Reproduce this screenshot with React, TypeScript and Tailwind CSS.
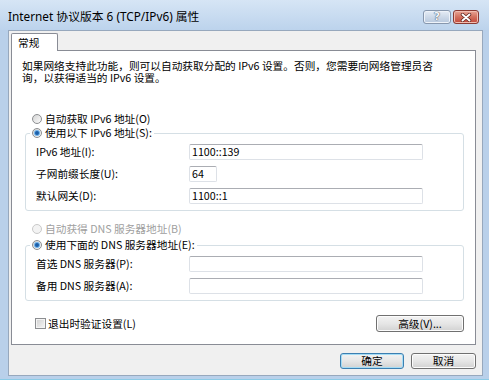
import React from "react";

const CJK = "font-['Noto_Sans_CJK_SC',sans-serif]";

function Radio({ checked, disabled }: { checked?: boolean; disabled?: boolean }) {
  return (
    <span
      className={
        "relative flex h-[10px] w-[10px] shrink-0 items-center justify-center rounded-full border " +
        (disabled
          ? "border-[#c9c9c9] bg-[#f3f3f3]"
          : "border-[#8c8e91] bg-gradient-to-br from-[#d4d4d4] to-[#fbfbfb]")
      }
    >
      {checked && (
        <span className="h-[4px] w-[4px] rounded-full bg-[#1d5fa8] shadow-[0_0_0_1px_#6fb3ec]" />
      )}
    </span>
  );
}

function Field({ w, value }: { w: string; value?: string }) {
  return (
    <div
      className={
        w +
        " flex h-[16px] items-center rounded-[2px] border border-[#dde1e7] border-t-[#abadb3] bg-white pl-[2px] text-[10.7px] leading-[14px] text-black"
      }
    >
      {value}
    </div>
  );
}

function Btn({ children, w, def, h }: { children: React.ReactNode; w: string; def?: boolean; h: string }) {
  return (
    <div
      className={
        w +
        " " +
        h +
        " flex items-center justify-center rounded-[3px] border bg-gradient-to-b from-[#f3f3f3] via-[#e6e6e6] to-[#d2d2d2] text-[10.7px] leading-[14px] text-black " +
        (def ? "border-[#3c7fb1] shadow-[inset_0_0_0_1px_#a5dcf5]" : "border-[#707070] shadow-[inset_0_0_0_1px_#fcfcfc]")
      }
    >
      {children}
    </div>
  );
}

function Row({ label, w, value }: { label: string; w: string; value?: string }) {
  return (
    <div className="flex h-[16px] items-center pl-[10px]">
      <div className="w-[153px] text-[10.7px] leading-[14px]">{label}</div>
      <Field w={w} value={value} />
    </div>
  );
}

export default function App() {
  return (
    <div className={CJK + " flex h-[380px] w-[489px] flex-col overflow-hidden bg-[#b9d0ea] text-black"}>
      {/* title bar */}
      <div className="flex h-[30px] shrink-0 items-start bg-gradient-to-b from-[#d6e5f5] to-[#bcd3ec] pl-[8px] pr-[10px]">
        <div className="mt-[8px] font-['Noto_Sans','Noto_Sans_CJK_SC',sans-serif] text-[11.8px] leading-[16px] text-black">
          Internet 协议版本 6 (TCP/IPv6) 属性
        </div>
        <div className="ml-auto mt-[10px] flex gap-[2px]">
          <div className="flex h-[14px] w-[28px] items-center justify-center rounded-[3px] border border-[#8797ad] bg-gradient-to-b from-[#e6edf6] via-[#cdd9e8] to-[#b7c8dd] shadow-[inset_0_0_0_1px_#eef3f9]">
            <span className="font-['DejaVu_Sans',sans-serif] text-[11px] font-bold leading-[12px] text-[#f4f6f9] [text-shadow:0_0_1px_#3d4d63,0_0_1px_#3d4d63]">
              ?
            </span>
          </div>
          <div className="flex h-[14px] w-[26px] items-center justify-center rounded-[3px] border border-[#8a3a33] bg-gradient-to-b from-[#e8a596] via-[#d2705e] to-[#c2463a] shadow-[inset_0_0_0_1px_#f0bcb0]">
            <svg width="12" height="9" viewBox="0 0 12 9">
              <path d="M2.5 1.5 L9.5 7.5 M9.5 1.5 L2.5 7.5" stroke="#5a1f1a" strokeWidth="3.4" strokeLinecap="round" />
              <path d="M2.5 1.5 L9.5 7.5 M9.5 1.5 L2.5 7.5" stroke="#ffffff" strokeWidth="2" strokeLinecap="round" />
            </svg>
          </div>
        </div>
      </div>

      {/* client area */}
      <div className="ml-[8px] flex h-[346px] w-[475px] flex-col border border-[#97a8bd] bg-[#f0f0f0]">
        {/* tab strip */}
        <div className="ml-[2px] mt-[1px] flex h-[18px] items-end">
          <div className="relative z-10 -mb-px flex h-[18px] w-[47px] items-center rounded-t-[2px] border border-b-0 border-[#898c95] bg-white pl-[6px] text-[10.7px] leading-[14px]">
            常规
          </div>
        </div>
        {/* panel */}
        <div className="ml-[2px] flex h-[295px] w-[465px] flex-col border border-[#898c95] bg-white">
          <div className="ml-[10px] mt-[9px] whitespace-nowrap text-[10.7px] leading-[12px]">
            <div>如果网络支持此功能，则可以自动获取分配的 IPv6 设置。否则，您需要向网络管理员咨</div>
            <div>询，以获得适当的 IPv6 设置。</div>
          </div>

          <div className="ml-[20px] mt-[28px] flex h-[14px] items-center gap-[3px] text-[10.7px] leading-[14px]">
            <Radio />
            <span>自动获取 IPv6 地址(O)</span>
          </div>

          <fieldset className="ml-[13px] w-[439px] rounded-[3px] border border-[#d5dfe5] pb-[6px]">
            <legend className="ml-[4px] px-[2px]">
              <span className="flex h-[14px] items-center gap-[3px] text-[10.7px] leading-[14px]">
                <Radio checked />
                <span>使用以下 IPv6 地址(S):</span>
              </span>
            </legend>
            <div className="mt-[4px] flex flex-col gap-[6px]">
              <Row label="IPv6 地址(I):" w="w-[234px]" value="1100::139" />
              <Row label="子网前缀长度(U):" w="w-[28px]" value="64" />
              <Row label="默认网关(D):" w="w-[234px]" value="1100::1" />
            </div>
          </fieldset>

          <div className="ml-[20px] mt-[11px] flex h-[14px] items-center gap-[3px] text-[10.7px] leading-[14px] text-[#a0a0a0]">
            <Radio disabled />
            <span>自动获得 DNS 服务器地址(B)</span>
          </div>

          <fieldset className="ml-[13px] mt-[2px] w-[439px] rounded-[3px] border border-[#d5dfe5] pb-[6px]">
            <legend className="ml-[4px] px-[2px]">
              <span className="flex h-[14px] items-center gap-[3px] text-[10.7px] leading-[14px]">
                <Radio checked />
                <span>使用下面的 DNS 服务器地址(E):</span>
              </span>
            </legend>
            <div className="mt-[4px] flex flex-col gap-[6px]">
              <Row label="首选 DNS 服务器(P):" w="w-[234px]" />
              <Row label="备用 DNS 服务器(A):" w="w-[234px]" />
            </div>
          </fieldset>

          <div className="ml-[23px] mr-[11px] mt-[14px] flex h-[17px] items-center">
            <span className="h-[11px] w-[11px] shrink-0 border border-[#8c8e91] bg-gradient-to-br from-[#d0d0d0] to-[#f6f6f6] shadow-[inset_0_0_0_1px_#f4f4f4]" />
            <span className="ml-[2px] text-[10.7px] leading-[14px]">退出时验证设置(L)</span>
            <div className="ml-auto">
              <Btn w="w-[88px]" h="h-[17px]">
                高级(V)...
              </Btn>
            </div>
          </div>
        </div>

        {/* buttons */}
        <div className="ml-[331px] mt-[8px] flex gap-[7px]">
          <Btn w="w-[64px]" h="h-[16px]" def>
            确定
          </Btn>
          <Btn w="w-[65px]" h="h-[16px]">
            取消
          </Btn>
        </div>
      </div>
      <div className="mt-auto h-[1px] bg-[#8ccbe6]" />
    </div>
  );
}
